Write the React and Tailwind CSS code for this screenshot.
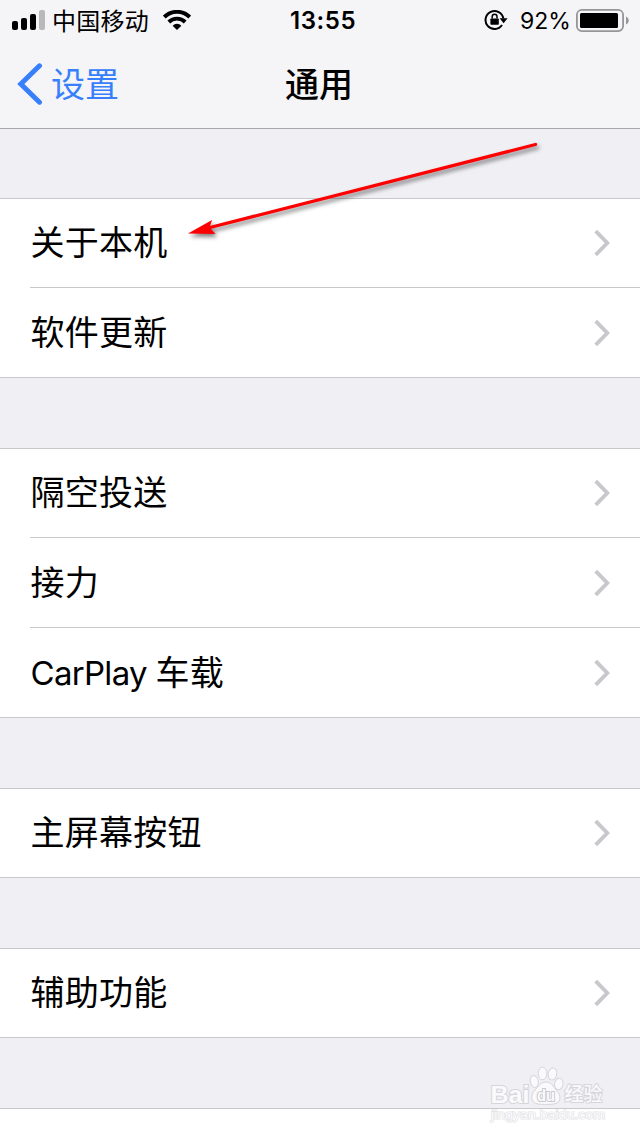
const groups = [
  ['关于本机', '软件更新'],
  ['隔空投送', '接力', 'CarPlay 车载'],
  ['主屏幕按钮'],
  ['辅助功能'],
];

function StatusBar() {
  return (
    <div className="relative flex h-10 items-center justify-between pl-3 pr-[11px] text-black">
      <div className="flex items-center">
        <svg width="33" height="20" viewBox="0 0 33 20">
          <rect x="0" y="11" width="6" height="9" rx="2" />
          <rect x="9" y="8" width="6" height="12" rx="2" />
          <rect x="18" y="4" width="6" height="16" rx="2" />
          <rect x="27" y="0" width="6" height="20" rx="2" fill="#b9b9bb" />
        </svg>
        <span className="ml-[7px] w-24 whitespace-nowrap pt-[3px] text-[24px] leading-10 tracking-[0.25px]">中国移动</span>
        <svg className="ml-[15px]" width="28" height="20" viewBox="0 0 28 20" fill="none" stroke="#000" strokeWidth="3.9">
          <path d="M1.3 7a18 18 0 0 1 25.4 0" />
          <path d="M5.8 12a11.6 11.6 0 0 1 16.4 0" />
          <path d="M14 20l-4.4-4.3a6.2 6.2 0 0 1 8.8 0z" fill="#000" stroke="none" />
        </svg>
      </div>
      <span className="absolute left-[290px] top-px text-[24px] font-semibold leading-10 tracking-[0.6px]">13:55</span>
      <div className="flex items-center">
        <svg width="24" height="22" viewBox="0 0 24 22">
          <path d="M18 16A9 9 0 1 1 19.4 9.5" fill="none" stroke="#000" strokeWidth="2" />
          <path d="M15.6 9.3h8l-4 4.9z" />
          <rect x="6.4" y="9.4" width="8.4" height="6.4" rx="0.8" />
          <path d="M8.2 9.6V7.6a2.4 2.4 0 0 1 4.8 0v2" fill="none" stroke="#000" strokeWidth="1.5" />
        </svg>
        <span className="ml-3 w-[49px] whitespace-nowrap pt-0.5 text-[23px] leading-10">92%</span>
        <svg className="ml-[7px]" width="53" height="23" viewBox="0 0 53 23">
          <rect x="0.9" y="0.9" width="46.2" height="21.2" rx="5" fill="none" stroke="#969698" strokeWidth="1.8" />
          <rect x="4" y="4" width="38" height="15" rx="1.5" />
          <path d="M50 7.5c3.6 1.5 3.6 6.5 0 8z" fill="#969698" />
        </svg>
      </div>
    </div>
  );
}

function NavBar() {
  return (
    <div className="relative flex h-[88px] items-center justify-center">
      <div className="absolute left-[17px] flex items-center text-[#3880fb]">
        <svg width="26" height="42" viewBox="0 0 26 42" fill="none" stroke="currentColor" strokeWidth="5" strokeLinecap="round">
          <path d="M22.5 2.8L3.8 21l18.7 18.2" />
        </svg>
        <span className="ml-2 pt-[2px] text-[34px] leading-[44px]">设置</span>
      </div>
      <h1 className="pr-[2px] pt-[2px] text-[34px] font-medium leading-[44px]">通用</h1>
    </div>
  );
}

function Row({ label, first, last }) {
  // latin names are set tighter than the chinese part
  const [, latin, rest] = label.match(/^([A-Za-z]+ )?(.*)$/);
  return (
    <li className="pl-[30px]">
      <div className={`box-content flex items-center justify-between ${first ? 'h-[88px]' : 'h-[89px]'} ${last ? '' : 'border-b border-[#c8c7cc]'}`}>
        <span className="whitespace-pre pl-[0.5px] text-[34px] leading-[44px] tracking-[0.25px]">
          {latin && <span className="text-[33px] tracking-[-0.7px]">{latin}</span>}
          {rest}
        </span>
        <svg className="mr-[29px]" width="18" height="28" viewBox="0 0 18 28" fill="none" stroke="#c7c7cc" strokeWidth="3.8">
          <path d="M2.7 2.2L14.3 14 2.7 25.8" />
        </svg>
      </div>
    </li>
  );
}

// red pointer drawn over the list
function Arrow() {
  return (
    <svg className="absolute left-[180px] top-[130px]" width="370" height="120" viewBox="180 130 370 120">
      <g className="drop-shadow-[2px_3px_2px_rgba(0,0,0,0.5)]">
        <path d="M535.5 144.5L208 228" stroke="#f00" strokeWidth="3.2" strokeLinecap="round" />
        <path d="M188 233.5l24-13.5-2.5 7.5 6 6.5z" fill="#f00" />
      </g>
    </svg>
  );
}

function Watermark() {
  return (
    <div className="absolute left-[484px] top-[1060px] h-16 w-[130px]">
      <svg width="130" height="64" viewBox="0 0 130 64" stroke="#d6d6da" fill="#fafafc">
        <text className="[font-family:'Liberation_Sans',sans-serif]" x="7" y="58.5" fontSize="12" paintOrder="stroke" stroke="#e2e2e5" strokeWidth="1.2" textLength="114" lengthAdjust="spacingAndGlyphs">jingyan.baidu.com</text>
        <g strokeWidth="1">
          <ellipse cx="50.3" cy="21.5" rx="4" ry="6" transform="rotate(-12 50.3 21.5)" />
          <ellipse cx="58.5" cy="13.5" rx="4.3" ry="6.3" />
          <ellipse cx="68.5" cy="14" rx="4.3" ry="6" transform="rotate(12 68.5 14)" />
          <ellipse cx="74.8" cy="24" rx="4.2" ry="5.8" transform="rotate(10 74.8 24)" />
          <path d="M62 22c6 0 7 5 10.5 8.5 5 4.5 5 12.500-2.500 13.500-5 .6-11.500 .6-16 0-8-1-7.500-9.500-3-14 4-3.800 5.500-8 11-8z" />
        </g>
        <g className="[font-family:'Liberation_Sans',sans-serif]" fontWeight="700" paintOrder="stroke" strokeWidth="2">
          <text x="6.500" y="42.500" fontSize="24" textLength="39" lengthAdjust="spacingAndGlyphs">Bai</text>
          <text x="53" y="40.5" fontSize="16" textLength="18" lengthAdjust="spacingAndGlyphs" stroke="#c9c9ce">du</text>
        </g>
        <text className="[font-family:'Noto_Sans_CJK_SC',sans-serif]" x="80.500" y="41" fontSize="19" fontWeight="500" paintOrder="stroke" strokeWidth="2">经验</text>
      </svg>
    </div>
  );
}

export default function App() {
  return (
    <div className="relative h-[1136px] w-[640px] overflow-hidden bg-[#efeff4] text-black [font-family:Inter,'Noto_Sans_CJK_SC',sans-serif]">
      <header className="h-[129px] border-b border-[#a7a7aa] bg-[#f5f5f7]">
        <StatusBar />
        <NavBar />
      </header>
      <main className="flex flex-col gap-[70px] pt-[69px]">
        {groups.map((items) => (
          <ul key={items[0]} className="border-y border-[#c8c7cc] bg-white">
            {items.map((label, i) => (
              <Row key={label} label={label} first={i === 0} last={i === items.length - 1} />
            ))}
          </ul>
        ))}
        <div className="h-[90px] shrink-0 border-t border-[#c8c7cc] bg-white" />
      </main>
      <Arrow />
      <Watermark />
    </div>
  );
}
